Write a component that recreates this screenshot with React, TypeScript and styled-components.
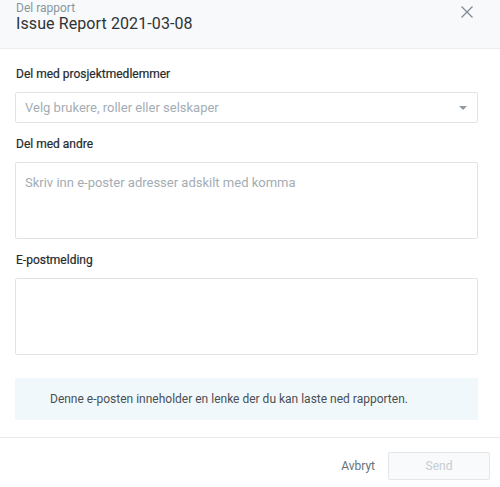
import React from "react";
import styled, { createGlobalStyle } from "styled-components";

const Global = createGlobalStyle`
  html, body { margin: 0; padding: 0; background: #ffffff; }
  body { font-family: Roboto, "Noto Sans", "Liberation Sans", sans-serif; color: #3c3c3c; }
  * { box-sizing: border-box; }
`;

const Dialog = styled.div`
  width: 500px;
  height: 487px;
  display: flex;
  flex-direction: column;
  background: #fff;
`;

const Header = styled.div`
  height: 49px;
  background: #f7f9fa;
  border-bottom: 1px solid #eaeef1;
  padding: 0 16px;
  display: flex;
  align-items: flex-start;
  justify-content: space-between;
`;

const Titles = styled.div`
  display: flex;
  flex-direction: column;
  padding-top: 1px;
`;

const Sub = styled.div`
  font-size: 12px;
  line-height: 14px;
  color: #8a979f;
`;

const Title = styled.div`
  font-size: 16px;
  line-height: 17px;
  color: #2f3336;
  letter-spacing: 0.1px;
`;

const Close = styled.button`
  border: 0;
  background: transparent;
  padding: 0;
  margin: 5px 10px 0 0;
  width: 14px;
  height: 14px;
  display: flex;
  color: #7d8a93;
`;

const Body = styled.div`
  padding: 18px 22px 0 15px;
  display: flex;
  flex-direction: column;
`;

const Label = styled.div`
  font-size: 12px;
  line-height: 14px;
  font-weight: 400;
  color: #262a2d;
  padding-left: 1px;
  margin-bottom: 11px;
  -webkit-text-stroke: 0.2px #262a2d;
`;

const Select = styled.div`
  height: 31px;
  border: 1px solid #dfe4e8;
  border-radius: 2px;
  display: flex;
  align-items: center;
  justify-content: space-between;
  padding: 0 10px 0 9px;
  margin-bottom: 14px;
`;

const Placeholder = styled.span`
  font-size: 13px;
  color: #a3adb4;
`;

const Caret = styled.span`
  width: 0;
  height: 0;
  border-left: 4px solid transparent;
  border-right: 4px solid transparent;
  border-top: 4px solid #8f9aa2;
  margin-top: 1px;
`;

const Area = styled.div<{ $mb: number }>`
  height: 77px;
  border: 1px solid #dfe4e8;
  border-radius: 2px;
  padding: 9px 9px;
  margin-bottom: ${(p) => p.$mb}px;
`;

const Info = styled.div`
  margin-top: 23px;
  height: 42px;
  background: #f1f8fc;
  display: flex;
  align-items: center;
  padding-left: 35px;
  font-size: 12px;
  color: #4a4f53;
`;

const Footer = styled.div`
  margin-top: 17px;
  border-top: 1px solid #e8ebed;
  flex: 1;
  display: flex;
  justify-content: flex-end;
  align-items: flex-start;
  padding: 14px 10px 0 0;
  gap: 13px;
`;

const TextBtn = styled.button`
  border: 0;
  background: transparent;
  padding: 0;
  height: 28px;
  font-family: inherit;
  font-size: 12px;
  color: #66727a;
`;

const SendBtn = styled.button`
  width: 102px;
  height: 28px;
  border: 1px solid #e3e7ea;
  border-radius: 2px;
  background: #f8fafb;
  font-family: inherit;
  font-size: 12px;
  color: #c7cdd2;
`;

export default function App() {
  return (
    <>
      <Global />
      <Dialog>
        <Header>
          <Titles>
            <Sub>Del rapport</Sub>
            <Title>Issue Report 2021-03-08</Title>
          </Titles>
          <Close aria-label="Lukk">
            <svg width="14" height="14" viewBox="0 0 14 14">
              <path d="M1.5 1.5 L12.5 12.5 M12.5 1.5 L1.5 12.5" stroke="currentColor" strokeWidth="1.2" fill="none" />
            </svg>
          </Close>
        </Header>
        <Body>
          <Label>Del med prosjektmedlemmer</Label>
          <Select>
            <Placeholder>Velg brukere, roller eller selskaper</Placeholder>
            <Caret />
          </Select>
          <Label>Del med andre</Label>
          <Area $mb={14}>
            <Placeholder>Skriv inn e-poster adresser adskilt med komma</Placeholder>
          </Area>
          <Label>E-postmelding</Label>
          <Area $mb={0} />
          <Info>Denne e-posten inneholder en lenke der du kan laste ned rapporten.</Info>
        </Body>
        <Footer>
          <TextBtn>Avbryt</TextBtn>
          <SendBtn>Send</SendBtn>
        </Footer>
      </Dialog>
    </>
  );
}
